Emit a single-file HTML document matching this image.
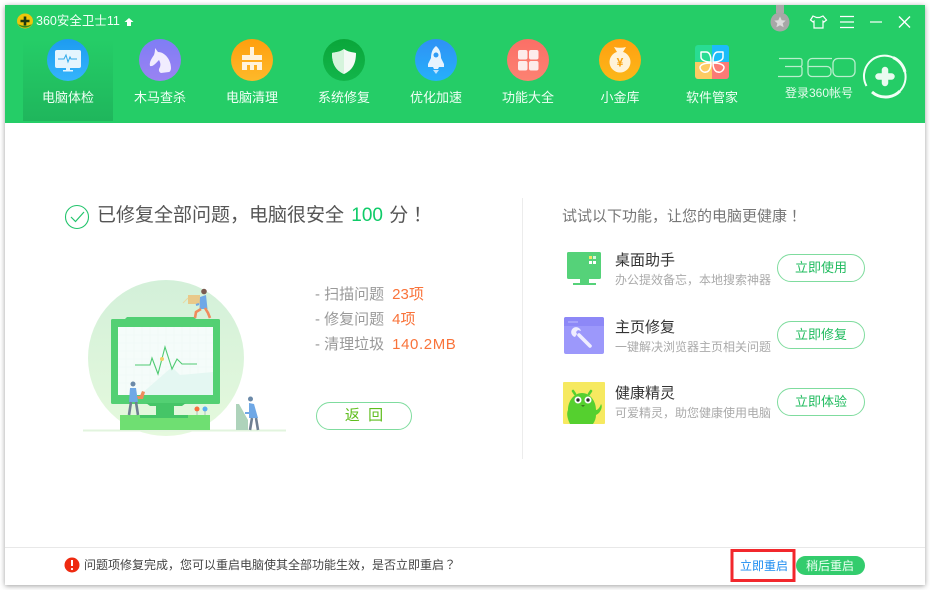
<!DOCTYPE html>
<html><head><meta charset="utf-8"><style>
html,body{margin:0;padding:0;width:930px;height:590px;overflow:hidden;background:#fff}
body{position:relative;font-family:"Liberation Sans","Noto Sans CJK SC","WenQuanYi Zen Hei",sans-serif}
#win{position:absolute;left:5px;top:5px;width:920px;height:580px;background:#fff;box-shadow:0 1px 5px rgba(0,0,0,.38)}
#hd{position:absolute;left:5px;top:5px;width:920px;height:118px;background:#25cd67}
#act{position:absolute;left:23px;top:40px;width:90px;height:81px;background:linear-gradient(#25cd67,#1fb65c)}
svg{position:absolute;left:0;top:0}
.t{position:absolute;white-space:nowrap;line-height:1}
.n{color:#f0fff5;font-size:13px;top:91px;width:92px;text-align:center}
.btn{position:absolute;left:777px;width:86px;height:26px;border:1px solid #7fdc9e;border-radius:14px;color:#1fbb5e;font-size:13px;line-height:26px;text-align:center;background:#fff}
.h{font-size:15px;color:#333;left:615px}
.s{font-size:12px;color:#aaa;left:615px}
.st{font-size:15px;color:#999;left:315px}
.or{color:#f9733a;margin-left:8px}
.tc{font-family:"Liberation Sans","Noto Sans CJK TC",sans-serif}
</style></head><body>
<div id="win"></div><div id="hd"></div><div id="act"></div>

<svg width="930" height="590" viewBox="0 0 930 590" fill="none">
<defs>
<linearGradient id="g1" x1="0" y1="0" x2="0" y2="1"><stop offset="0" stop-color="#1d9bf0"/><stop offset="1" stop-color="#35b4fb"/></linearGradient>
<linearGradient id="g2" x1="0" y1="0" x2="0" y2="1"><stop offset="0" stop-color="#7f7df5"/><stop offset="1" stop-color="#9a83f2"/></linearGradient>
<linearGradient id="g3" x1="0" y1="0" x2="0" y2="1"><stop offset="0" stop-color="#ff9f0e"/><stop offset="1" stop-color="#fdb92a"/></linearGradient>
<linearGradient id="g4" x1="0" y1="0" x2="0" y2="1"><stop offset="0" stop-color="#0aa63a"/><stop offset="1" stop-color="#12b54a"/></linearGradient>
<linearGradient id="g5" x1="0" y1="0" x2="0" y2="1"><stop offset="0" stop-color="#2f91f5"/><stop offset="1" stop-color="#26b0fb"/></linearGradient>
<linearGradient id="g6" x1="0" y1="0" x2="0" y2="1"><stop offset="0" stop-color="#fb6f66"/><stop offset="1" stop-color="#fc8272"/></linearGradient>
<linearGradient id="g7" x1="0" y1="0" x2="0" y2="1"><stop offset="0" stop-color="#ff9f10"/><stop offset="1" stop-color="#fcb819"/></linearGradient>
<linearGradient id="c" x1="0" y1="0" x2="0" y2="1"><stop offset="0" stop-color="#d3f0d9"/><stop offset="1" stop-color="#e5f9dd"/></linearGradient>
</defs>

<!-- logo -->
<ellipse cx="25" cy="21" rx="8" ry="7.500" fill="#eec60c"/>
<path d="M18 24a8 7 0 0 0 14 0a9 5 0 0 1-14 0z" fill="#2f8a1c"/>
<path d="M25 16.500v9M20.500 21h9" stroke="#1c3a10" stroke-width="2.600"/>
<path d="M129 18l4.500 4h-2.500v4h-4v-4h-2.500z" fill="#fff"/>

<!-- nav icons -->
<circle cx="68" cy="60" r="21" fill="url(#g1)"/>
<rect x="55" y="50" width="26" height="18" rx="2" fill="#e4f5fe"/>
<path d="M58 59h6l2-4 2 7 2-5 1 2h6" stroke="#2ea9ea" stroke-width="1"/>
<path d="M66 68h4v2h3v1.500H63V70h3z" fill="#e4f5fe"/>

<circle cx="160" cy="60" r="21" fill="url(#g2)"/>
<path d="M155 48l3 4c7 0 13 8 13 16 0 2-1 4-2 4l-8 1c-2-1-3-3-1-6 1-3 0-5-1-7-3 3-6 7-9 6-1-4 2-8 4-11 1-3 1-5 1-7z" fill="#f1ecfe"/>

<circle cx="252" cy="60" r="21" fill="url(#g3)"/>
<path d="M250 47h4v8h8v5h-20v-5h8z" fill="#fff3dc"/>
<path d="M242 62h20v8h-5v-5h-3v5h-4v-5h-3v5h-5z" fill="#fff3dc"/>

<circle cx="344" cy="60" r="21" fill="url(#g4)"/>
<path d="M344 49c4 3 8 3 12 4 0 10-3 17-12 21-9-4-12-11-12-21 4-1 8-1 12-4z" fill="#f3faf5"/>
<path d="M344 49c-4 3-8 3-12 4 0 10 3 17 12 21z" fill="#d5f4dc"/>

<circle cx="436" cy="60" r="21" fill="url(#g5)"/>
<path d="M436 46c4 3 5 8 5 12l3 6v3h-5l-1 2h-4l-1-2h-5v-3l3-6c0-4 1-9 5-12z" fill="#e6f4fe"/>
<circle cx="436" cy="55" r="2.500" fill="#2f9cf5"/>
<path d="M433 70h6l-3 4z" fill="#bfe2fc"/>

<circle cx="528" cy="60" r="21" fill="url(#g6)"/>
<rect x="518" y="50" width="9.500" height="9.500" rx="2" fill="#fdeceb"/><rect x="529" y="50" width="9.500" height="9.500" rx="2" fill="#fdeceb"/>
<rect x="518" y="61" width="9.500" height="9.500" rx="2" fill="#fdeceb"/><rect x="529" y="61" width="9.500" height="9.500" rx="2" fill="#fdeceb"/>

<circle cx="620" cy="60" r="21" fill="url(#g7)"/>
<path d="M614 47c4 1 8 1 12 0l-3 5h-6z" fill="#fff3d8"/>
<circle cx="620" cy="62" r="10.500" fill="#fff3d8"/>
<text x="620" y="66.500" font-size="12" font-weight="bold" fill="#f9a412" text-anchor="middle" font-family="Liberation Sans">¥</text>

<rect x="695" y="45" width="34" height="34" rx="3" fill="#29dc93"/>
<path d="M712 45h14a3 3 0 0 1 3 3v14h-17z" fill="#1cbcf9"/>
<path d="M695 62h17v17h-14a3 3 0 0 1-3-3z" fill="#fdcb63"/>
<path d="M712 62h17v14a3 3 0 0 1-3 3h-14z" fill="#fb7a76"/>
<g stroke="#fff" stroke-width="1.500" stroke-linejoin="round">
<path d="M701 52h5c3 0 5 3 5 10-6 0-10-2-10-5z"/>
<path d="M723 52h-5c-3 0-5 3-5 10 6 0 10-2 10-5z"/>
<path d="M711 63c-6 0-10 1-11 4 0 3 3 6 6 5 3 0 5-4 5-9z"/>
<path d="M713 63c6 0 10 1 11 4 0 3-3 6-6 5-3 0-5-4-5-9z"/>
</g>

<!-- title bar right -->
<path d="M776 5h8v8h-8z" fill="#a9a9a9"/>
<circle cx="780" cy="22" r="9.500" fill="#a7a7a7"/>
<path d="M780 16.500l1.700 3.700 4 .4-3 2.700.9 4-3.600-2.100-3.600 2.100.9-4-3-2.700 4-.4z" fill="#dcdcdc"/>
<path d="M813 16l3.500 1.500h3l3.500-1.500 3.500 4-2.500 2-1-.8V28h-9v-6.800l-1 .8-2.500-2z" stroke="#fff" stroke-width="1.200"/>
<path d="M840 16.500h14M840 22h14M840 27.500h14" stroke="#fff" stroke-width="1.200"/>
<path d="M870 22h12" stroke="#fff" stroke-width="1.200"/>
<path d="M899 16.500l11 11M910 16.500l-11 11" stroke="#fff" stroke-width="1.400"/>

<!-- 360 logo -->
<g stroke="#b9efcd" stroke-width="1.300">
<path d="M779 58.500h21a2 2 0 0 1 2 2v4a2 2 0 0 1-2 2h-15M800 66.500a2 2 0 0 1 2 2v5a3 3 0 0 1-3 3h-21"/>
<path d="M832 58.500h-20a4 4 0 0 0-4 4v10a4 4 0 0 0 4 4h15a4 4 0 0 0 4-4v-2a4 4 0 0 0-4-4h-19" />
<rect x="833" y="58.500" width="22" height="18" rx="5"/>
</g>

<!-- plus circle -->
<path d="M866.500 86A20.500 20.500 0 0 1 893 57.500" stroke="#f2fff6" stroke-width="2"/>
<path d="M893 57.500A20.500 20.500 0 0 1 905 72" stroke="#f2fff6" stroke-width="3"/>
<path d="M905 72A20.500 20.500 0 0 1 900 91" stroke="#f2fff6" stroke-width="2"/>
<path d="M900 91A20.500 20.500 0 0 1 872 92" stroke="#f2fff6" stroke-width="3"/>
<path d="M885 70v13M878.500 76.500h13" stroke="#e9fbf0" stroke-width="6.500" stroke-linecap="round"/>

<!-- check -->
<circle cx="77" cy="217" r="11.500" stroke="#22c46c" stroke-width="1.100"/>
<path d="M71 217l4.500 4.500L84 212" stroke="#22c46c" stroke-width="1.200"/>

<!-- illustration -->
<circle cx="166" cy="358" r="78" fill="url(#c)"/>
<path d="M83 430.500h203" stroke="#e2f4de" stroke-width="2"/>
<path d="M125 319l2-2h67l2 2z" fill="#52cf74"/>
<rect x="111" y="319" width="109" height="85" rx="1.500" fill="#53d073"/>
<rect x="118" y="327" width="95" height="68" fill="#f5fcfa"/>
<g stroke="#eef8f5" stroke-width=".6">
<path d="M118 335h95M118 343h95M118 351h95M118 359h95M118 367h95M118 375h95M118 383h95M126 327v68M134 327v68M142 327v68M150 327v68M158 327v68M166 327v68M174 327v68M182 327v68M190 327v68M198 327v68M206 327v68"/>
</g>
<path d="M140 395l32-28 8 8 33-3v23z" fill="#e4f7f2"/>
<path d="M135 365h15l2-7 6 16 7-27 7 22 5-10 5 5h15" stroke="#4fca72" stroke-width="1.100"/>
<circle cx="162" cy="359" r="2" fill="#f0cf66"/>
<path d="M146 403h40l-4 3h-32z" fill="#45c567"/>
<rect x="156" y="405" width="18" height="12" fill="#45c567"/>
<rect x="120" y="415" width="90" height="15" fill="#6fdf72"/>
<rect x="140" y="415" width="48" height="3" fill="#45c567"/>
<circle cx="197" cy="409" r="2.500" fill="#f7703d"/><circle cx="205" cy="409" r="2.500" fill="#5ab0f0"/>
<path d="M197 411v4M205 411v4" stroke="#9aa" stroke-width=".7"/>
<!-- top person -->
<rect x="188" y="295" width="12" height="9" fill="#e9c98a"/>
<path d="M183 303l5-5" stroke="#e9d9a0" stroke-width="1"/>
<circle cx="204" cy="291.500" r="2.800" fill="#7a5a50"/>
<path d="M200 297l6-2 1.500 14h-8z" fill="#6fa8e6"/>
<path d="M199 304l-3 1" stroke="#6fa8e6" stroke-width="2"/>
<path d="M201 309l-5 3-1 6M205 308l3 5 2 5" stroke="#f08b5c" stroke-width="2.600"/>
<!-- left person -->
<circle cx="133" cy="384" r="2.500" fill="#6b89a8"/>
<path d="M130 388h6l2 14h-9z" fill="#6fa8e6"/>
<path d="M131 402l-2 13M136 402l2 13" stroke="#6f7f92" stroke-width="2.600"/>
<path d="M137 396l3 0 2-5 3 1-2 7h-5z" fill="#f08b5c"/>
<!-- right person -->
<path d="M236 404h3l9 16v10h-12z" fill="#aed3bb"/>
<rect x="245" y="412" width="5" height="2" fill="#6fa8e6"/>
<circle cx="250.500" cy="399" r="2.500" fill="#6b89a8"/>
<path d="M249 403l5 1 4 14h-9z" fill="#6fa8e6"/>
<path d="M252 418l-2 12M256 418l2 12" stroke="#6f7f92" stroke-width="2.600"/>

<path d="M522.500 198v261" stroke="#ececec"/>

<!-- right icons -->
<rect x="567" y="252" width="34" height="27" rx="1.500" fill="#55d279"/>
<rect x="580" y="279" width="9" height="4" fill="#55d279"/><rect x="573" y="283" width="23" height="2" fill="#55d279"/>
<rect x="589" y="256" width="3" height="3" fill="#f5e663"/><rect x="593" y="256" width="3" height="3" fill="#d9f6e0"/><rect x="589" y="261" width="3" height="3" fill="#fff"/><rect x="593" y="261" width="3" height="3" fill="#fff"/>

<rect x="564" y="317" width="40" height="37" rx="2" fill="#9c98fb"/>
<path d="M564 319a2 2 0 0 1 2-2h36a2 2 0 0 1 2 2v7h-40z" fill="#8d88f7"/>
<path d="M568 322h10" stroke="#b8b5fc" stroke-width="1.200"/>
<path d="M590 346l-11-11" stroke="#efedff" stroke-width="3.600" stroke-linecap="round"/>
<path d="M581 331a5 5 0 1 0-6 6l2-3-1-2 2-2z" fill="#efedff"/>

<rect x="563" y="382" width="42" height="42" rx="1" fill="#f6e960"/>
<path d="M570 424c-2-4-4-10-2-14 0-9 6-17 14-17s14 8 14 17c2 0 4-3 5-6 2 2 0 9-5 11 0 3-1 6-3 9z" fill="#55d02f"/>
<path d="M575 394l-2-3M589 394l2-3" stroke="#55d02f" stroke-width="2.500" stroke-linecap="round"/>
<circle cx="578" cy="400" r="3.500" fill="#fff"/><circle cx="588" cy="400" r="3.500" fill="#fff"/>
<circle cx="578" cy="400" r="1.700" fill="#333"/><circle cx="588" cy="400" r="1.700" fill="#333"/>
<path d="M581 405h4l-2 2z" fill="#3a7a20"/>

<!-- bottom -->
<path d="M5 547.500h920" stroke="#e8e8e8"/>
<circle cx="72" cy="565" r="7.500" fill="#ee2a10"/>
<path d="M72 560v6" stroke="#fff" stroke-width="2"/><circle cx="72" cy="569" r="1.100" fill="#fff"/>
<rect x="732" y="550.500" width="62" height="30" stroke="#f2272c" stroke-width="3"/>
<rect x="796" y="556" width="69" height="19" rx="9.500" fill="#33cc6d"/>
</svg>

<div class="t" style="left:36px;top:15px;font-size:12.500px;color:#f2fff7">360安全卫士11</div>
<div class="t n" style="left:22px">电脑体检</div>
<div class="t n" style="left:114px">木马查杀</div>
<div class="t n" style="left:206px">电脑清理</div>
<div class="t n" style="left:298px">系统修复</div>
<div class="t n" style="left:390px">优化加速</div>
<div class="t n" style="left:482px">功能大全</div>
<div class="t n" style="left:574px">小金库</div>
<div class="t n" style="left:666px">软件管家</div>
<div class="t" style="left:785px;top:87px;font-size:12px;color:#e6fbed">登录360帐号</div>

<div class="t" style="left:97px;top:206px;font-size:19px;color:#555">已修复全部问题，电脑很安全 <span style="color:#0fcb68;margin-left:2px;margin-right:1px">100</span> <span>分</span><span class="tc">！</span></div>

<div class="t st" style="top:287px">- 扫描问题<span class="or">23项</span></div>
<div class="t st" style="top:312px">- 修复问题<span class="or">4项</span></div>
<div class="t st" style="top:337px">- 清理垃圾<span class="or" style="letter-spacing:.6px">140.2MB</span></div>
<div class="t" style="left:316px;top:402px;width:94px;height:26px;border:1px solid #7fdc9e;border-radius:14px;color:#5fbd1e;font-size:15px;line-height:26px;text-align:center">返&nbsp;&nbsp;回</div>

<div class="t" style="left:562px;top:209px;font-size:15px;color:#777">试试以下功能，让您的电脑更健康<span class="tc">！</span></div>

<div class="t h" style="top:253px">桌面助手</div>
<div class="t s" style="top:274px">办公提效备忘，本地搜索神器</div>
<div class="btn" style="top:254px">立即使用</div>
<div class="t h" style="top:320px">主页修复</div>
<div class="t s" style="top:341px">一键解决浏览器主页相关问题</div>
<div class="btn" style="top:321px">立即修复</div>
<div class="t h" style="top:386px">健康精灵</div>
<div class="t s" style="top:407px">可爱精灵，助您健康使用电脑</div>
<div class="btn" style="top:388px">立即体验</div>

<div class="t" style="left:84px;top:559px;font-size:12px;color:#444">问题项修复完成，您可以重启电脑使其全部功能生效，是否立即重启<span class="tc">？</span></div>
<div class="t" style="left:740px;top:560px;font-size:12px;color:#1c8cf0">立即重启</div>
<div class="t" style="left:806px;top:560px;font-size:12px;color:#eafff1">稍后重启</div>
</body></html>
